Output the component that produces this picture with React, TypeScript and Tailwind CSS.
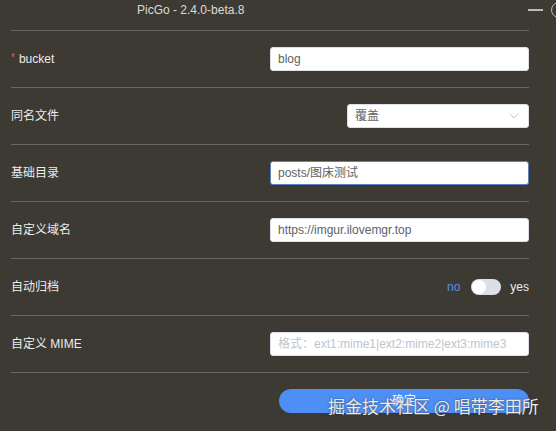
import React from 'react';

const rowCls = 'flex items-center justify-between h-[57px] border-t border-[#6b6761]';
const labelCls = 'text-[12px] text-[#eeece8]';
const inputCls =
  'w-[259px] h-[24px] rounded-[3px] bg-white border px-[7px] text-[12px] flex items-center';

const Field = ({ label, children, required }: { label: string; children: React.ReactNode; required?: boolean }) => (
  <div className={rowCls}>
    <div className={labelCls}>
      {required && <span className="text-[#c46a74] text-[10px] mr-[4px] relative -top-[2px]">*</span>}
      {label}
    </div>
    {children}
  </div>
);

const App = () => {
  return (
    <div className="relative w-[556px] h-[431px] overflow-hidden bg-[#3d3a34] font-['Liberation_Sans','Noto_Sans_CJK_SC',sans-serif]">
      {/* title bar */}
      <div className="flex items-center h-[18px] mt-[1px]">
        <div className="w-[528px] shrink-0 pl-[137px] text-[12px] text-[#dcdad6]">PicGo - 2.4.0-beta.8</div>
        <div className="w-[15px] h-[2px] bg-[#bdbbb7] shrink-0" />
        <div className="ml-[8px] w-[16px] h-[16px] rounded-full border-[1.5px] border-[#bdbbb7] shrink-0" />
      </div>

      <div className="mt-[11px] ml-[11px] w-[518px]">
        <Field label="bucket" required>
          <div className={`${inputCls} border-[#dcdfe6] text-[#606266]`}>blog</div>
        </Field>
        <Field label="同名文件">
          <div className="w-[182px] h-[24px] rounded-[3px] bg-white border border-[#dcdfe6] pl-[7px] pr-[9px] flex items-center justify-between text-[12px] text-[#606266]">
            <span>覆盖</span>
            <svg width="10" height="6" viewBox="0 0 10 6" fill="none">
              <path d="M0.5 0.5 L5 5 L9.5 0.5" stroke="#c0c4cc" strokeWidth="1" />
            </svg>
          </div>
        </Field>
        <Field label="基础目录">
          <div className={`${inputCls} border-[#5a83c2] text-[#606266]`}>posts/图床测试</div>
        </Field>
        <Field label="自定义域名">
          <div className={`${inputCls} border-[#dcdfe6] text-[#606266]`}>https://imgur.ilovemgr.top</div>
        </Field>
        <Field label="自动归档">
          <div className="flex items-center text-[12px]">
            <span className="text-[#5a8fe2]">no</span>
            <div className="ml-[11px] w-[30px] h-[16px] rounded-full bg-[#dcdfe6] p-[1px] flex items-center">
              <div className="w-[14px] h-[14px] rounded-full bg-white" />
            </div>
            <span className="ml-[9px] text-[#eeece8]">yes</span>
          </div>
        </Field>
        <Field label="自定义 MIME">
          <div className={`${inputCls} border-[#dcdfe6] text-[#c0c4cc]`}>格式：ext1:mime1|ext2:mime2|ext3:mime3</div>
        </Field>
        <div className="border-t border-[#6b6761] flex justify-end pt-[16px]">
          <button className="w-[250px] h-[24px] rounded-full bg-[#4e8ff5] text-white text-[12px] flex items-center justify-center">
            确定
          </button>
        </div>
      </div>

      {/* watermark */}
      <div className="absolute left-[328px] top-[397px] text-[17px] leading-none text-[#ecebea] font-['Noto_Sans_CJK_SC',sans-serif] [text-shadow:0_0_2px_rgba(40,40,40,0.8)] whitespace-nowrap">
        掘金技术社区 @ 唱带李田所
      </div>
    </div>
  );
};

export default App;
